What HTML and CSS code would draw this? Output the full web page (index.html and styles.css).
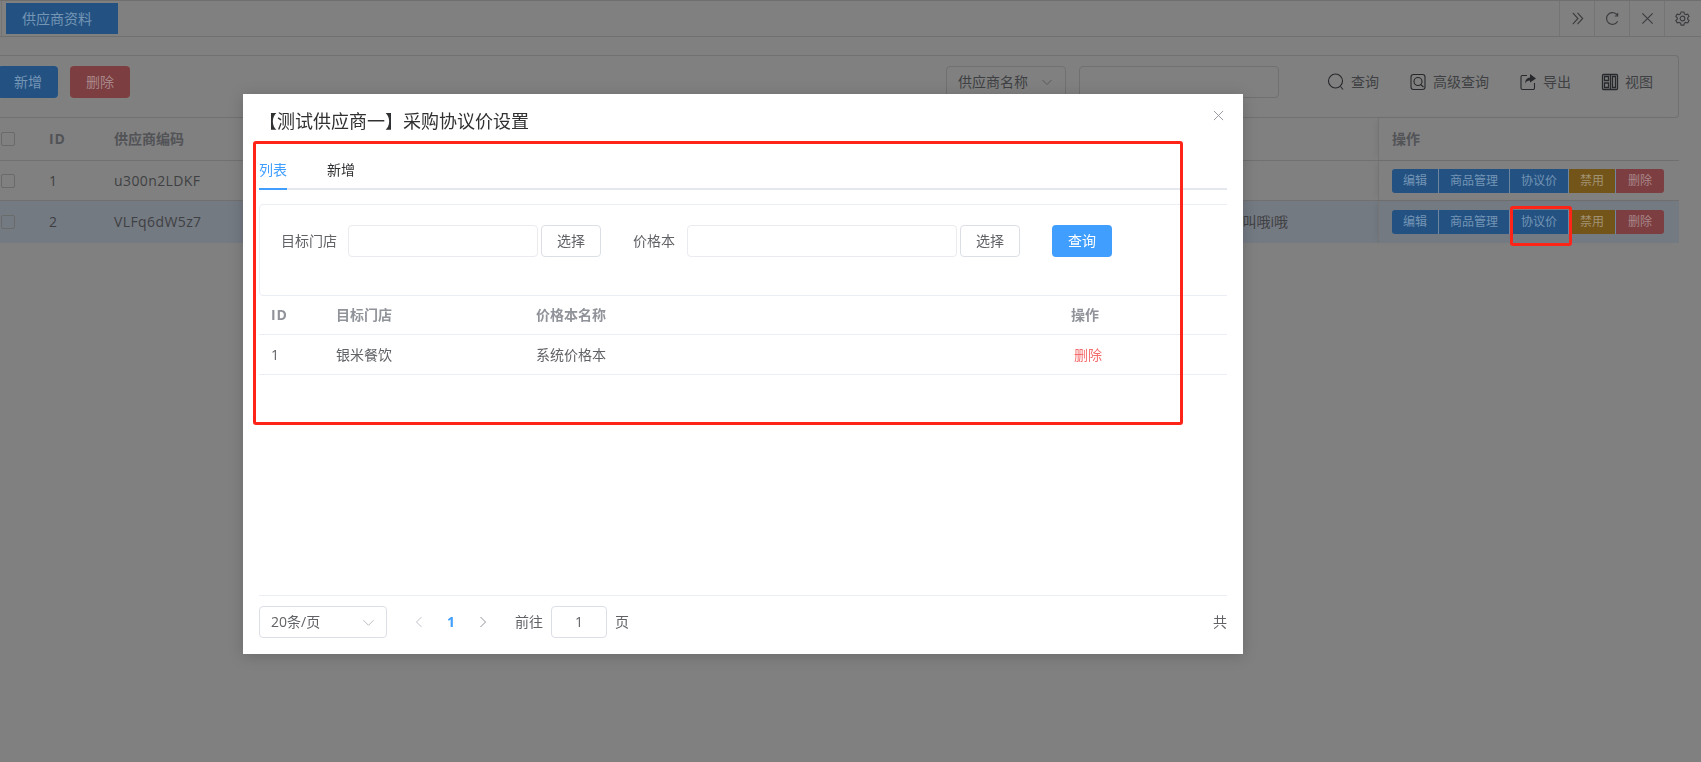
FILE: index.html
```html
<!DOCTYPE html>
<html lang="zh">
<head>
<meta charset="utf-8">
<title>供应商资料</title>
<link rel="stylesheet" href="styles.css">
</head>
<body>
<div class="page">
  <header class="topbar">
    <div class="tabs-host"><span class="page-tab">供应商资料</span></div>
    <div class="top-tools">
      <span class="top-tool"><svg viewBox="0 0 16 16" class="ti"><path d="M3 2l5.500 6L3 14M8 2l5.500 6L8 14"/></svg></span>
      <span class="top-tool"><svg viewBox="0 0 16 16" class="ti"><path d="M13.500 5A6.300 6.300 0 1 0 13.500 11M13.500 2v3.300h-3"/></svg></span>
      <span class="top-tool"><svg viewBox="0 0 16 16" class="ti"><path d="M2.500 2.500l11 11M13.500 2.500l-11 11"/></svg></span>
      <span class="top-tool"><svg viewBox="0 0 16 16" class="ti"><path d="M6.500 1h3l.5 2 1.600.9 2-.6 1.400 2.500-1.500 1.400v1.600l1.500 1.400-1.400 2.500-2-.6-1.600.9-.5 2h-3l-.5-2-1.600-.9-2 .6L.9 10.200l1.500-1.400V7.200L.9 5.800l1.400-2.500 2 .6L5.900 3z"/><circle cx="8" cy="8" r="2.500"/></svg></span>
    </div>
  </header>

  <section class="toolbar">
    <div class="toolbar-left">
      <button class="btn btn-blue">新增</button>
      <button class="btn btn-red">删除</button>
    </div>
    <div class="toolbar-right">
      <div class="select-box">供应商名称<svg viewBox="0 0 12 12" class="chev"><path d="M1.500 4l4.500 4.500L10.500 4"/></svg></div>
      <div class="text-box"></div>
      <span class="action action-search"><svg viewBox="0 0 18 18" class="ai"><circle cx="8.500" cy="8" r="7"/><path d="M13.500 13.500l2.500 3"/></svg>查询</span>
      <span class="action action-adv"><svg viewBox="0 0 18 18" class="ai"><rect x="2" y="1.500" width="14" height="15" rx="2.500"/><circle cx="9" cy="8.500" r="4"/><path d="M11.500 11.500l3 2.500"/></svg>高级查询</span>
      <span class="action action-export"><svg viewBox="0 0 18 18" class="ai"><path d="M8 2.500H3.500a1.500 1.500 0 0 0-1.500 1.500v11a1.500 1.500 0 0 0 1.500 1.500h10.500a1.500 1.500 0 0 0 1.500-1.500V10"/><path class="fill" d="M11 1l6 4.500-6 4V7.500c-2.500 0-4 1-5 3 .2-3.500 2-5.800 5-6z"/></svg>导出</span>
      <span class="action action-view"><svg viewBox="0 0 18 18" class="ai ai-bold"><rect x="1.500" y="1.500" width="15" height="15" rx="1"/><path d="M9.500 1.500v15M11.500 3.500h3v11h-3zM3.500 3.500h4v4h-4zM3.500 10h4v4.500h-4z"/></svg>视图</span>
    </div>
  </section>

  <section class="grid">
    <div class="g-row g-head">
      <span class="g-check"><i class="box"></i></span>
      <span class="g-id">ID</span>
      <span class="g-code">供应商编码</span>
      <span class="g-note"></span>
      <span class="g-ops">操作</span>
    </div>
    <div class="g-row">
      <span class="g-check"><i class="box"></i></span>
      <span class="g-id">1</span>
      <span class="g-code g-code-val">u300n2LDKF</span>
      <span class="g-note"></span>
      <span class="g-ops">
        <span class="group">
          <b class="gb gb-blue gb-w47">编辑</b><b class="gb gb-blue gb-w71">商品管理</b><b class="gb gb-blue gb-w59">协议价</b><b class="gb gb-orange gb-w47">禁用</b><b class="gb gb-red gb-w48">删除</b>
        </span>
      </span>
    </div>
    <div class="g-row g-current">
      <span class="g-check"><i class="box"></i></span>
      <span class="g-id">2</span>
      <span class="g-code g-code-val">VLFq6dW5z7</span>
      <span class="g-note">叫哦i哦</span>
      <span class="g-ops">
        <span class="group">
          <b class="gb gb-blue gb-w47">编辑</b><b class="gb gb-blue gb-w71">商品管理</b><b class="gb gb-blue gb-w59">协议价</b><b class="gb gb-orange gb-w47">禁用</b><b class="gb gb-red gb-w48">删除</b>
        </span>
      </span>
    </div>
  </section>
</div>

<div class="modal">
  <h2 class="modal-title">【测试供应商一】采购协议价设置</h2>
  <svg viewBox="0 0 12 12" class="modal-close"><path d="M1 1l10 10M11 1L1 11"/></svg>
  <div class="modal-body">
    <nav class="m-tabs">
      <span class="m-tab m-tab-on">列表</span>
      <span class="m-tab">新增</span>
    </nav>
    <div class="filter">
      <label class="f-label f-label-a">目标门店</label>
      <div class="f-input f-input-a"></div>
      <button class="f-btn">选择</button>
      <label class="f-label f-label-b">价格本</label>
      <div class="f-input f-input-b"></div>
      <button class="f-btn">选择</button>
      <button class="f-query">查询</button>
    </div>
    <div class="m-row m-head">
      <span class="c-id">ID</span><span class="c-store">目标门店</span><span class="c-price">价格本名称</span><span class="c-op">操作</span>
    </div>
    <div class="m-row">
      <span class="c-id">1</span><span class="c-store">银米餐饮</span><span class="c-price">系统价格本</span><span class="c-op"><a class="del">删除</a></span>
    </div>
    <footer class="pager">
      <div class="pager-left">
        <div class="size-select">20条/页<svg viewBox="0 0 14 14" class="size-chev"><path d="M1.500 4.500L7 10l5.500-5.500"/></svg></div>
        <svg viewBox="0 0 10 14" class="pg-arrow pg-prev"><path d="M7.500 2L2.500 7l5 5"/></svg>
        <span class="pg-num">1</span>
        <svg viewBox="0 0 10 14" class="pg-arrow pg-next"><path d="M2.500 2l5 5-5 5"/></svg>
        <span class="pg-text">前往</span>
        <div class="pg-input">1</div>
        <span class="pg-text">页</span>
      </div>
      <span class="pg-total">共</span>
    </footer>
  </div>
</div>

<div class="mark mark-form"></div>
<div class="mark mark-btn"></div>
</body>
</html>
```

FILE: styles.css
```css
* { box-sizing: border-box; }
html, body { margin: 0; height: 100%; }
body {
  width: 1701px;
  height: 762px;
  overflow: hidden;
  background: #808080;
  font: 14px/20px "Open Sans", "Noto Sans CJK SC", sans-serif;
  color: #3f4043;
}
button { font: inherit; margin: 0; padding: 0; }
svg { fill: none; stroke: currentColor; display: block; flex: none; }

/* dimmed page */
.page { width: 1701px; height: 762px; }
.topbar {
  height: 37px;
  display: flex;
  justify-content: space-between;
  border-top: 1px solid #6f6f6f;
  border-bottom: 1px solid #707070;
}
.tabs-host { border-left: 1px solid #747474; margin-left: 1px; padding: 2px 0 0 4px; }
.page-tab {
  display: block;
  width: 112px;
  height: 31px;
  line-height: 31px;
  padding-right: 10px;
  text-align: center;
  background: #235282;
  color: #7595b5;
}
.top-tools { display: flex; margin-right: 2px; }
.top-tool {
  width: 35px;
  display: flex;
  align-items: center;
  justify-content: center;
  border-left: 1px solid #747474;
  color: #3b3c3f;
}
.ti { width: 15px; height: 15px; stroke-width: 1.200; }

.toolbar {
  width: 1681px;
  height: 63px;
  margin-top: 18px;
  margin-left: -2px;
  display: flex;
  justify-content: space-between;
  align-items: flex-start;
  padding-top: 10px;
  border: 1px solid #707070;
  border-left: 0;
  border-radius: 0 4px 4px 0;
}
.toolbar-left { display: flex; gap: 12px; }
.btn {
  width: 60px;
  height: 32px;
  border: 0;
  border-radius: 4px;
  font-size: 14px;
}
.btn-blue { background: #235282; color: #7595b5; }
.btn-red { background: #7c3e41; color: #a98789; }
.toolbar-right { display: flex; align-items: center; height: 32px; }
.select-box {
  width: 120px;
  height: 32px;
  margin-right: 13px;
  padding-left: 11px;
  display: flex;
  align-items: center;
  gap: 13px;
  border: 1px solid #707070;
  border-radius: 4px;
}
.chev { width: 12px; height: 12px; color: #5a5a5a; stroke-width: 1; }
.text-box { width: 200px; height: 32px; border: 1px solid #707070; border-radius: 4px; margin-right: 48px; }
.action { display: flex; align-items: center; gap: 6px; color: #3f4043; }
.ai { width: 18px; height: 18px; color: #26282c; stroke-width: 1.100; }
.ai-bold { stroke-width: 1.300; }
.ai .fill { fill: #26282c; stroke: none; }
.action-search { margin-right: 30px; }
.action-adv { margin-right: 30px; }
.action-export { margin-right: 30px; }
.action-view { margin-right: 25px; }

.grid { width: 1679px; }
.g-row { display: flex; align-items: center; height: 40px; border-bottom: 1px solid #707070; }
.g-head { height: 43px; font-weight: 700; color: #525357; }
.g-current { height: 42px; background: #747a82; border-bottom: 0; }
.g-check { width: 49px; padding-left: 1px; display: flex; }
.box { display: block; width: 14px; height: 14px; border: 1px solid #6a6a6a; border-radius: 2px; }
.g-id { width: 65px; }
.g-head .g-id { letter-spacing: .8px; }
.g-code { width: 200px; }
.g-code-val { letter-spacing: .4px; }
.g-note { flex: 1; text-align: right; padding-right: 90px; }
.g-ops {
  width: 301px;
  align-self: stretch;
  display: flex;
  align-items: center;
  padding-left: 13px;
  border-left: 1px solid #747474;
  box-shadow: -4px 0 6px -3px rgba(0, 0, 0, .08);
}
.group { display: flex; border-radius: 3px; overflow: hidden; }
.gb {
  display: block;
  height: 24px;
  font-weight: 400;
  font-size: 12px;
  line-height: 24px;
  text-align: center;
  border-right: 1px solid #6f86a0;
}
.gb:last-child { border-right: 0; }
.gb-blue { background: #235282; color: #7595b5; }
.gb-orange { background: #745519; color: #a09274; }
.gb-red { background: #7c3e41; color: #a98789; }
.gb-w47 { width: 47px; }
.gb-w48 { width: 48px; }
.gb-w59 { width: 59px; }
.gb-w71 { width: 71px; }

/* dialog */
.modal {
  position: fixed;
  left: 243px;
  top: 94px;
  width: 1000px;
  height: 560px;
  background: #fff;
  display: flex;
  flex-direction: column;
  padding: 15px 16px 16px;
  color: #606266;
  box-shadow: 0 2px 14px rgba(0, 0, 0, .18);
}
.modal-title {
  margin: 0;
  font-size: 18px;
  font-weight: 400;
  line-height: 24px;
  color: #303133;
}
.modal-close {
  position: absolute;
  top: 16px;
  right: 19px;
  width: 11px;
  height: 11px;
  color: #909399;
  stroke-width: 1;
}
.modal-body { flex: 1; min-height: 0; width: 968px; overflow: hidden; display: flex; flex-direction: column; }
.m-tabs { height: 57px; display: flex; gap: 40px; align-items: flex-end; border-bottom: 2px solid #e4e7ed; flex: none; }
.m-tab { height: 40px; line-height: 40px; margin-bottom: -2px; color: #303133; }
.m-tab-on { color: #409eff; border-bottom: 2px solid #409eff; }
.filter {
  width: 1100px;
  height: 92px;
  margin-top: 14px;
  flex: none;
  display: flex;
  align-items: flex-start;
  padding: 20px 0 0 21px;
  border: 1px solid #ebeef5;
  border-radius: 4px;
}
.f-label { line-height: 32px; width: 56px; white-space: nowrap; color: #606266; }
.f-label-a { margin-right: 11px; }
.f-label-b { width: 42px; margin-left: 32px; margin-right: 12px; }
.f-input { height: 32px; border: 1px solid #e9ebef; border-radius: 4px; margin-right: 3px; }
.f-input-a { width: 190px; }
.f-input-b { width: 270px; }
.f-btn {
  width: 60px;
  height: 32px;
  background: #fff;
  color: #606266;
  border: 1px solid #dcdfe6;
  border-radius: 4px;
}
.f-query {
  width: 60px;
  height: 32px;
  margin-left: 32px;
  background: #409eff;
  color: #fff;
  border: 0;
  border-radius: 4px;
}
.m-row {
  flex: none;
  height: 40px;
  display: flex;
  align-items: center;
  padding-left: 12px;
  border-bottom: 1px solid #ebeef5;
}
.m-head { height: 39px; font-weight: 700; color: #909399; }
.m-head .c-id { letter-spacing: .8px; }
.c-id { width: 65px; }
.c-store { width: 200px; }
.c-price { width: 535px; }
.c-op { width: 60px; }
.del { color: #f56c6c; margin-left: 3px; }

.pager {
  margin-top: auto;
  flex: none;
  height: 43px;
  padding-top: 10px;
  border-top: 1px solid #ebeef5;
  display: flex;
  justify-content: space-between;
  align-items: flex-start;
}
.pager-left { display: flex; align-items: center; height: 32px; }
.size-select {
  width: 128px;
  height: 32px;
  padding: 0 11px;
  display: flex;
  align-items: center;
  justify-content: space-between;
  border: 1px solid #dcdfe6;
  border-radius: 4px;
}
.size-chev { width: 13px; height: 13px; color: #b4b7bd; stroke-width: 1; }
.pg-arrow { width: 10px; height: 14px; stroke-width: 1; }
.pg-prev { margin-left: 27px; color: #c0c4cc; }
.pg-next { margin-left: 22px; color: #909399; }
.pg-num { margin-left: 22px; width: 10px; text-align: center; font-weight: 700; color: #409eff; }
.pg-text { white-space: nowrap; }
.pg-next + .pg-text { margin-left: 27px; }
.pg-input {
  width: 56px;
  height: 32px;
  margin: 0 8px;
  line-height: 30px;
  text-align: center;
  border: 1px solid #dcdfe6;
  border-radius: 4px;
}
.pg-total { line-height: 32px; }

/* hand-drawn annotation rectangles on the screenshot */
.mark { position: fixed; border: 3px solid #ff2418; border-radius: 3px; }
.mark-form { left: 253px; top: 141px; width: 930px; height: 284px; }
.mark-btn { left: 1510px; top: 206px; width: 62px; height: 40px; }
```
